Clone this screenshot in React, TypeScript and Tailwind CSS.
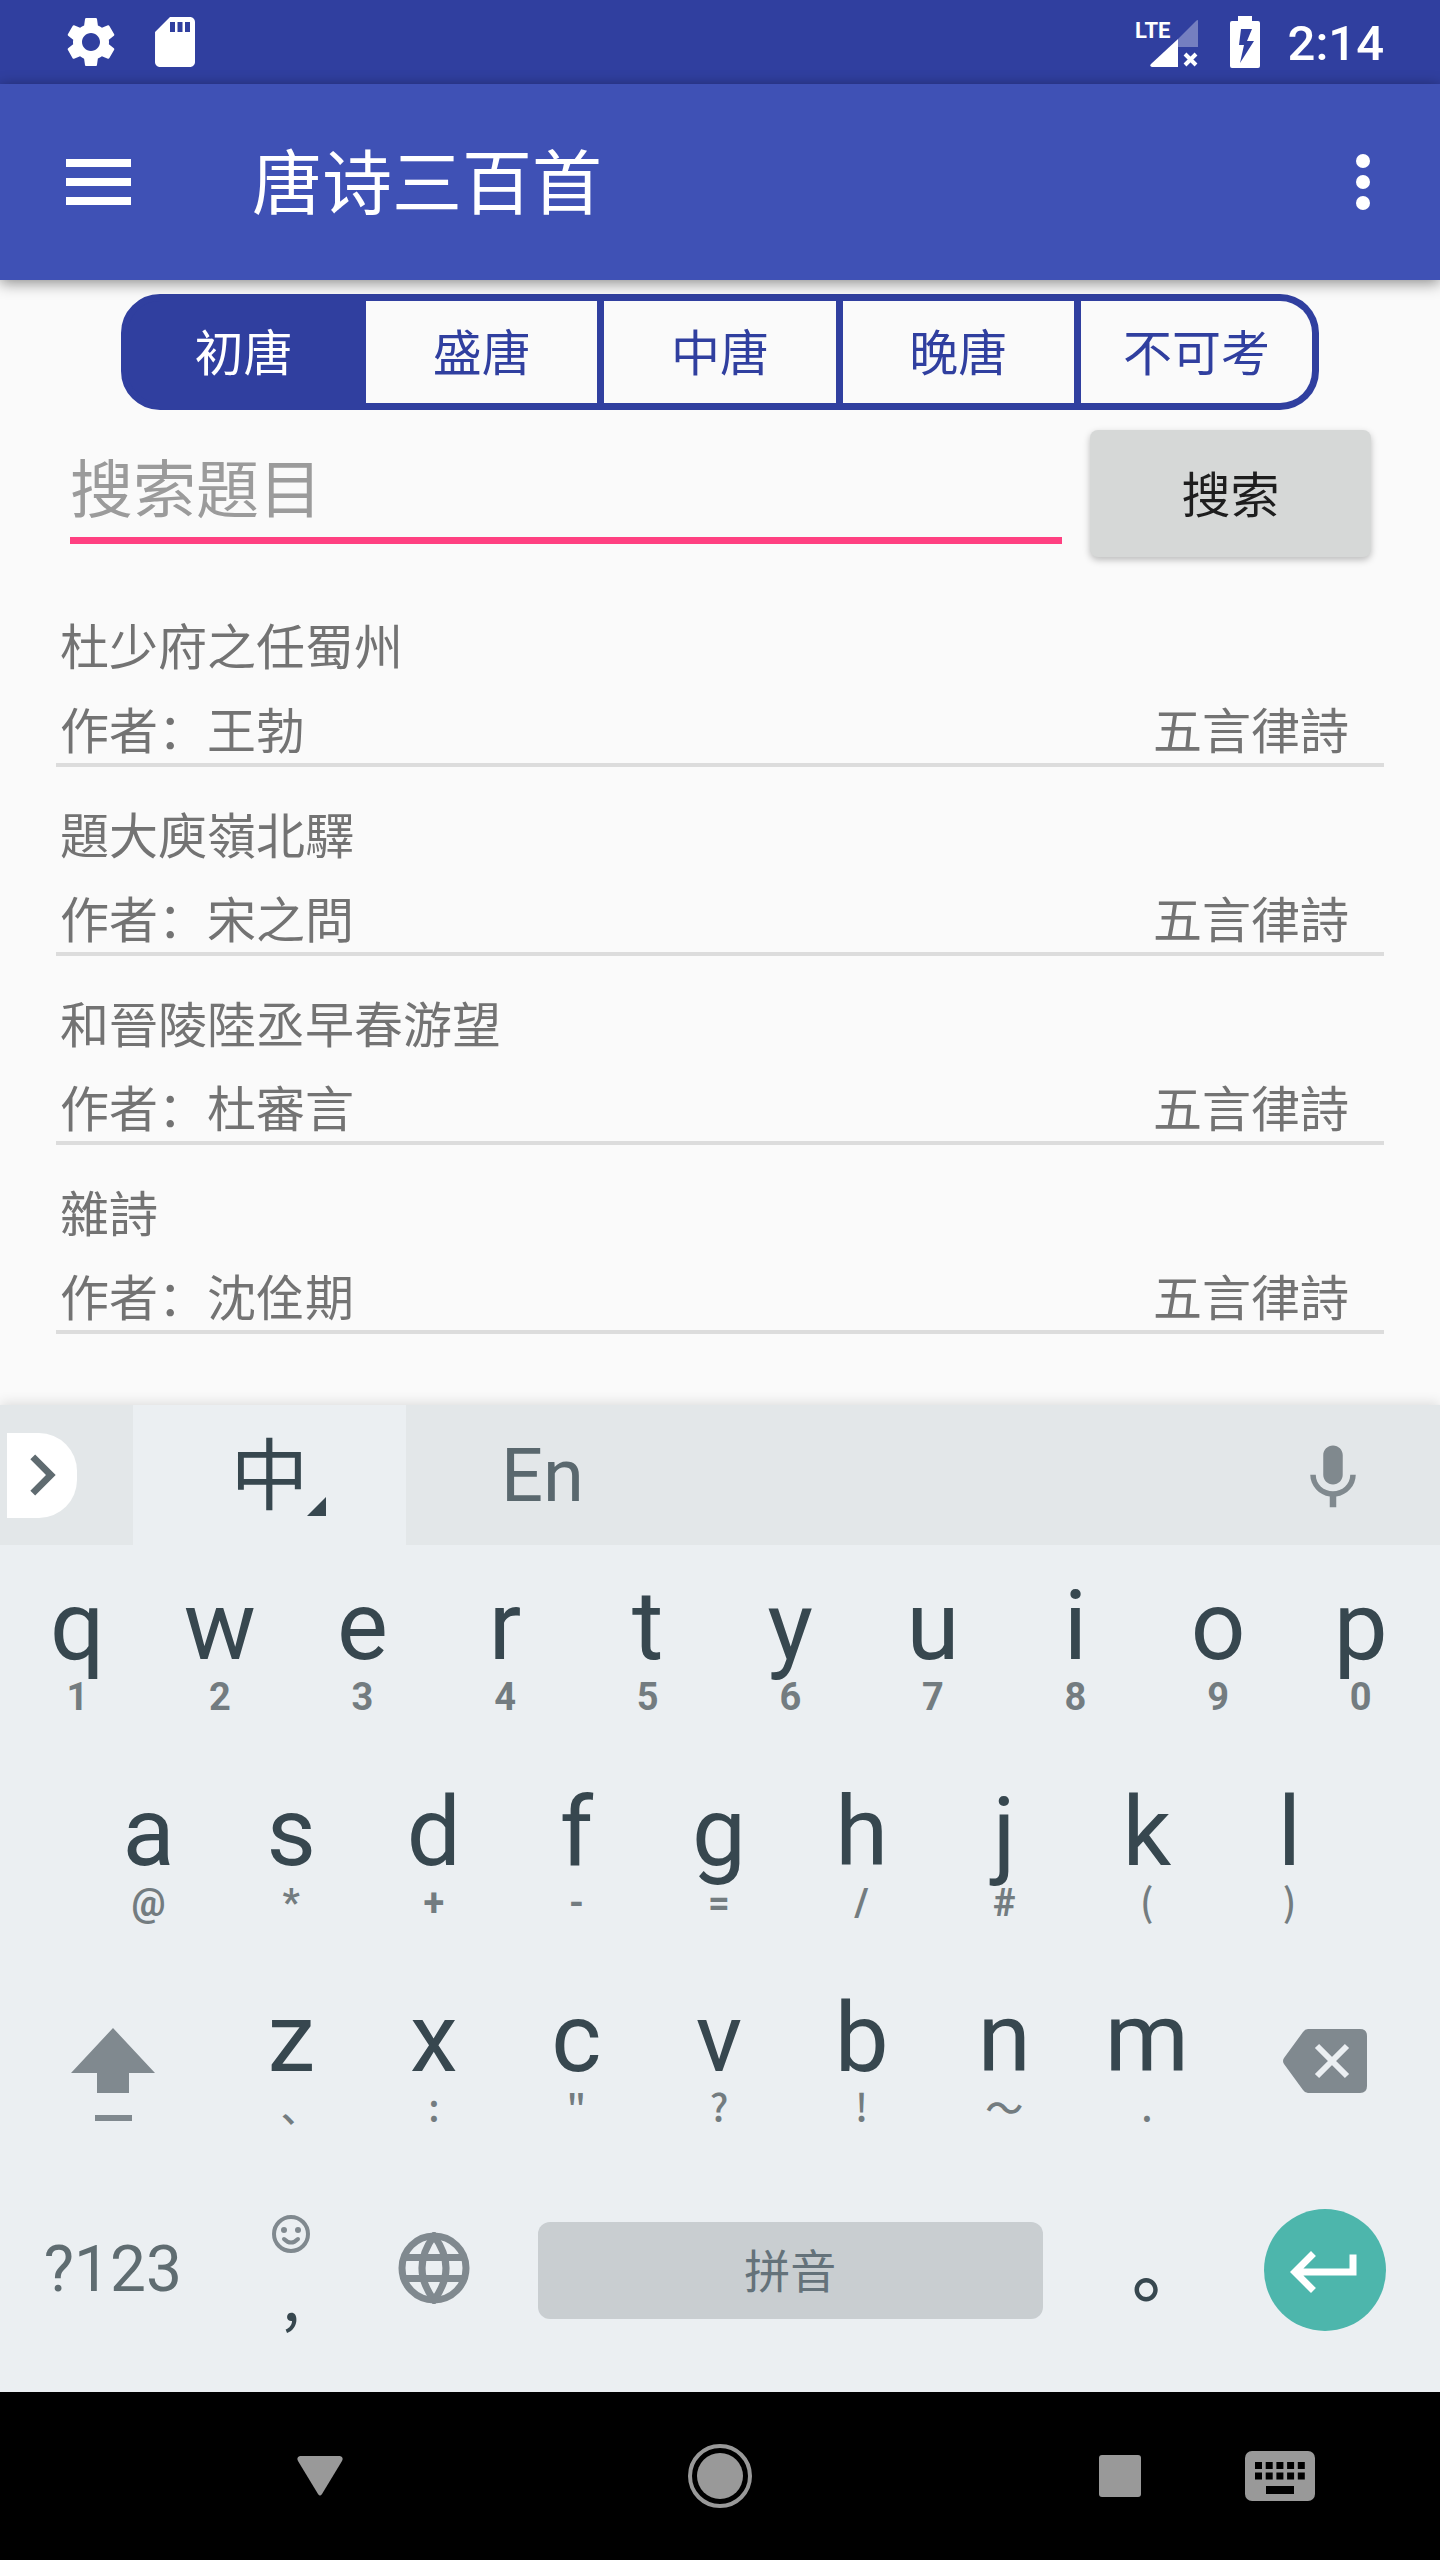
import { ReactNode, useState } from "react"
import {
    MdChevronRight,
    MdKeyboardReturn,
    MdMic,
    MdSdCard,
    MdSettings,
} from "react-icons/md"

type Poem = { title: string; author: string; form: string }
type KeyDef = { letter: string; hint: string; cjk?: boolean }

const PERIODS = ["初唐", "盛唐", "中唐", "晚唐", "不可考"]

const POEMS: Poem[] = [
    { title: "杜少府之任蜀州", author: "王勃", form: "五言律詩" },
    { title: "題大庾嶺北驛", author: "宋之問", form: "五言律詩" },
    { title: "和晉陵陸丞早春游望", author: "杜審言", form: "五言律詩" },
    { title: "雜詩", author: "沈佺期", form: "五言律詩" },
]

const ROW_1: KeyDef[] = [
    { letter: "q", hint: "1" },
    { letter: "w", hint: "2" },
    { letter: "e", hint: "3" },
    { letter: "r", hint: "4" },
    { letter: "t", hint: "5" },
    { letter: "y", hint: "6" },
    { letter: "u", hint: "7" },
    { letter: "i", hint: "8" },
    { letter: "o", hint: "9" },
    { letter: "p", hint: "0" },
]

const ROW_2: KeyDef[] = [
    { letter: "a", hint: "@" },
    { letter: "s", hint: "*" },
    { letter: "d", hint: "+" },
    { letter: "f", hint: "-" },
    { letter: "g", hint: "=" },
    { letter: "h", hint: "/" },
    { letter: "j", hint: "#" },
    { letter: "k", hint: "(", cjk: true },
    { letter: "l", hint: ")", cjk: true },
]

const ROW_3: KeyDef[] = [
    { letter: "z", hint: "､", cjk: true },
    { letter: "x", hint: ":", cjk: true },
    { letter: "c", hint: '"', cjk: true },
    { letter: "v", hint: "?", cjk: true },
    { letter: "b", hint: "!", cjk: true },
    { letter: "n", hint: "～", cjk: true },
    { letter: "m", hint: ".", cjk: true },
]

function StatusBar() {
    return (
        <div className="flex h-[84px] items-center justify-between bg-[#303f9f] pr-[56px] pl-[61px] text-white">
            <div className="flex items-center gap-6">
                <MdSettings className="size-[60px]" />
                <MdSdCard className="size-[60px]" />
            </div>
            <div className="flex items-center">
                <svg viewBox="0 0 66 50" className="h-[50px] w-[66px]">
                    <text
                        x="3"
                        y="21"
                        fill="#fff"
                        fontSize="22"
                        fontWeight="700"
                        fontFamily="Roboto, sans-serif"
                    >
                        LTE
                    </text>
                    <path d="M46 22 64 4q2-2 2 0v26H46z" fill="#757fc0" />
                    <path d="M46 22v28H20q-3-1-1-3z" fill="#fff" />
                    <path
                        d="m53 37 11 11m0-11L53 48"
                        stroke="#fff"
                        strokeWidth="4"
                    />
                </svg>
                <svg
                    viewBox="0 0 30 52"
                    className="ml-8 h-[52px] w-[30px]"
                    fillRule="evenodd"
                >
                    <path
                        d="M8 0h14v5h6q2 0 2 2v43q0 2-2 2H2q-2 0-2-2V7q0-2 2-2h6zM11 13 9 29h5l-4 18 14-22h-7l5-12z"
                        fill="#fff"
                    />
                </svg>
                <span className="ml-7 pt-1 text-[49px] leading-[60px] font-medium">
                    2:14
                </span>
            </div>
        </div>
    )
}

function AppBar() {
    return (
        <header className="relative z-10 flex h-[196px] items-center bg-[#3f51b5] pr-[70px] pl-[66px] text-white shadow-[0_3px_14px_rgba(0,0,0,0.45)]">
            <button aria-label="菜单">
                <svg
                    viewBox="0 0 65 46"
                    className="h-[46px] w-[65px]"
                    fill="currentColor"
                >
                    <path d="M0 0h65v8H0zM0 19h65v8H0zM0 38h65v8H0z" />
                </svg>
            </button>
            <h1 className="ml-[121px] flex-1 pt-1.5 text-[70px] leading-[84px]">
                唐诗三百首
            </h1>
            <button aria-label="更多选项">
                <svg
                    viewBox="0 0 14 56"
                    className="h-[56px] w-[14px]"
                    fill="currentColor"
                >
                    <circle cx="7" cy="7" r="7" />
                    <circle cx="7" cy="28" r="7" />
                    <circle cx="7" cy="49" r="7" />
                </svg>
            </button>
        </header>
    )
}

function PeriodTabs() {
    const [active, setActive] = useState(0)

    return (
        <div className="mx-[121px] mt-[14px] flex h-[116px] text-[49px]">
            {PERIODS.map((period, i) => (
                <button
                    key={period}
                    onClick={() => setActive(i)}
                    className={`flex-1 border-y-[7px] border-r-[7px] border-[#303f9f] pt-1.5 first:rounded-l-[39px] first:border-l-[7px] last:rounded-r-[39px] ${
                        i === active
                            ? "bg-[#303f9f] text-white"
                            : "text-[#303f9f]"
                    }`}
                >
                    {period}
                </button>
            ))}
        </div>
    )
}

function PoemRow({ poem }: { poem: Poem }) {
    return (
        <li className="flex flex-col gap-6 border-b-4 border-[#dcdcdc] pt-[41px] pr-[35px] pl-1 text-[49px] leading-[60px] text-[#737373]">
            <span>{poem.title}</span>
            <div className="flex justify-between">
                <span>作者：{poem.author}</span>
                <span>{poem.form}</span>
            </div>
        </li>
    )
}

function LetterKey({
    def,
    className = "",
    onPress,
}: {
    def: KeyDef
    className?: string
    onPress: (letter: string) => void
}) {
    return (
        <button
            onClick={() => onPress(def.letter)}
            className={`col-span-2 flex flex-col items-center justify-center ${className}`}
        >
            <span className="text-[96px] leading-[96px] text-[#37474f]">
                {def.letter}
            </span>
            <span
                className={`text-[38px] text-[#737c80] ${
                    def.cjk
                        ? "pb-1.5 font-['Noto_Sans_CJK_SC',sans-serif] leading-[40px] font-medium"
                        : "leading-[46px] font-bold"
                }`}
            >
                {def.hint}
            </span>
        </button>
    )
}

function KeyRow({ children }: { children: ReactNode }) {
    return <div className="grid h-[206px] grid-cols-20">{children}</div>
}

function SmileyIcon() {
    return (
        <svg
            viewBox="0 0 38 38"
            className="size-[38px]"
            fill="none"
            stroke="#80898f"
            strokeWidth="4"
        >
            <circle cx="19" cy="19" r="17" />
            <path d="M12 24q7 7 14 0" strokeLinecap="round" />
            <circle cx="12" cy="15" r="3" fill="#80898f" stroke="none" />
            <circle cx="26" cy="15" r="3" fill="#80898f" stroke="none" />
        </svg>
    )
}

function GlobeIcon() {
    return (
        <svg
            viewBox="0 0 72 72"
            className="size-[72px]"
            fill="none"
            stroke="currentColor"
            strokeWidth="7"
        >
            <circle cx="36" cy="36" r="32" />
            <path d="M36 4Q12 36 36 68Q60 36 36 4zM8 25.5h56M8 46.5h56" />
        </svg>
    )
}

function ImeToolbar() {
    return (
        <div className="flex h-[140px] items-center bg-[#e3e7e9]">
            <div className="w-[133px] pl-[7px]">
                <button
                    aria-label="展开"
                    className="flex h-[85px] w-[70px] items-center justify-center rounded-r-[38px] bg-white text-[#5f6b70]"
                >
                    <MdChevronRight className="size-[82px] shrink-0" />
                </button>
            </div>
            <button className="relative h-full w-[273px] bg-[#ebeff2] pt-1.5 text-[78px] leading-[84px] text-[#37474f]">
                中
                <svg
                    viewBox="0 0 19 19"
                    className="absolute right-[80px] bottom-[29px] size-[19px]"
                    fill="currentColor"
                >
                    <path d="M19 0v19H0z" />
                </svg>
            </button>
            <button className="h-full w-[273px] text-[74px] text-[#5a686e]">
                En
            </button>
            <button
                aria-label="语音输入"
                className="mr-[68px] ml-auto pt-1.5 text-[#80898e]"
            >
                <MdMic className="size-[78px]" />
            </button>
        </div>
    )
}

function Keyboard({
    onPress,
    onDelete,
}: {
    onPress: (letter: string) => void
    onDelete: () => void
}) {
    return (
        <section className="relative bg-[#ebeff2] shadow-[0_-2px_12px_rgba(0,0,0,0.12)]">
            <ImeToolbar />
            <div className="pt-px pr-2 pb-[19px] pl-1.5">
                <KeyRow>
                    {ROW_1.map((k) => (
                        <LetterKey key={k.letter} def={k} onPress={onPress} />
                    ))}
                </KeyRow>
                <KeyRow>
                    {ROW_2.map((k, i) => (
                        <LetterKey
                            key={k.letter}
                            def={k}
                            onPress={onPress}
                            className={i === 0 ? "col-start-2" : ""}
                        />
                    ))}
                </KeyRow>
                <KeyRow>
                    <button
                        aria-label="Shift"
                        className="col-span-3 flex items-center justify-center pt-7 text-[#80898f]"
                    >
                        <svg
                            viewBox="0 0 84 94"
                            className="h-[94px] w-[84px]"
                            fill="currentColor"
                        >
                            <path d="M42 0 84 45H58v20H26V45H0zM24 87h37v6H24z" />
                        </svg>
                    </button>
                    {ROW_3.map((k) => (
                        <LetterKey key={k.letter} def={k} onPress={onPress} />
                    ))}
                    <button
                        aria-label="删除"
                        onClick={onDelete}
                        className="col-span-3 flex items-center justify-center"
                    >
                        <svg viewBox="0 0 84 64" className="h-[64px] w-[84px]">
                            <path
                                d="M20 3q2-3 5-3h52q7 0 7 7v50q0 7-7 7H25q-3 0-5-3L1 35q-2-3 0-6z"
                                fill="#80898f"
                            />
                            <path
                                d="m34 17 30 30m0-30L34 47"
                                stroke="#ebeff2"
                                strokeWidth="6"
                            />
                        </svg>
                    </button>
                </KeyRow>
                <div className="pt-[3px]">
                    <KeyRow>
                        <button className="col-span-3 text-[64px] text-[#5f6c71]">
                            ?123
                        </button>
                        <button
                            onClick={() => onPress("，")}
                            className="col-span-2 flex flex-col items-center justify-center gap-2 text-[#37474f]"
                        >
                            <SmileyIcon />
                            <span className="font-['Noto_Sans_CJK_SC',sans-serif] text-[64px] leading-[64px]">
                                ,
                            </span>
                        </button>
                        <button
                            aria-label="切换语言"
                            className="col-span-2 flex items-center justify-center pb-1 text-[#80898f]"
                        >
                            <GlobeIcon />
                        </button>
                        <button
                            onClick={() => onPress(" ")}
                            className="col-span-8 mx-[33px] h-[97px] self-center rounded-xl bg-[#c9ced1] pt-1 text-[46px] text-[#64727a]"
                        >
                            拼音
                        </button>
                        <button
                            onClick={() => onPress("。")}
                            className="col-span-2 pb-3 pl-2 font-['Noto_Sans_CJK_SC',sans-serif] text-[74px] leading-[84px] font-medium text-[#37474f]"
                        >
                            ｡
                        </button>
                        <button
                            aria-label="回车"
                            className="col-span-3 flex size-[122px] items-center justify-center place-self-center rounded-full bg-[#4db6ac] pt-1 text-white"
                        >
                            <MdKeyboardReturn className="size-[84px]" />
                        </button>
                    </KeyRow>
                </div>
            </div>
        </section>
    )
}

function NavBar() {
    return (
        <nav className="grid h-[168px] grid-cols-18 items-center bg-black text-[#999]">
            <button
                aria-label="返回"
                className="col-span-2 col-start-4 flex justify-center"
            >
                <svg
                    viewBox="0 0 46 40"
                    className="h-[40px] w-[46px]"
                    fill="currentColor"
                >
                    <path d="M3 0h40q4 1 2 5L25 38q-2 3-4 0L1 5Q-1 1 3 0z" />
                </svg>
            </button>
            <button
                aria-label="主屏幕"
                className="col-span-2 col-start-9 flex justify-center"
            >
                <svg viewBox="0 0 64 64" className="size-[64px]">
                    <circle
                        cx="32"
                        cy="32"
                        r="30"
                        fill="none"
                        stroke="currentColor"
                        strokeWidth="4"
                    />
                    <circle cx="32" cy="32" r="23" fill="currentColor" />
                </svg>
            </button>
            <button
                aria-label="最近任务"
                className="col-span-2 col-start-14 flex justify-center"
            >
                <span className="size-[42px] rounded-[3px] bg-[#999]" />
            </button>
            <button
                aria-label="切换键盘"
                className="col-span-2 flex justify-center"
            >
                <svg viewBox="0 0 70 50" className="h-[50px] w-[70px]">
                    <rect width="70" height="50" rx="7" fill="currentColor" />
                    <path
                        d="M10 14.5h50M10 25h50"
                        stroke="#000"
                        strokeWidth="7"
                        strokeDasharray="7 3.7"
                    />
                    <path d="M21 35h28v8H21z" />
                </svg>
            </button>
        </nav>
    )
}

function App() {
    const [query, setQuery] = useState("")

    return (
        <div className="flex min-h-screen flex-col bg-[#fafafa] font-['Roboto','Noto_Sans_CJK_SC',sans-serif]">
            <StatusBar />
            <AppBar />
            <main className="flex-1">
                <PeriodTabs />
                <form
                    className="mt-5 flex gap-7 pr-[69px] pl-[70px]"
                    onSubmit={(e) => e.preventDefault()}
                >
                    <input
                        type="text"
                        aria-label="搜索題目"
                        placeholder="搜索題目"
                        value={query}
                        onChange={(e) => setQuery(e.target.value)}
                        className="h-[114px] min-w-0 flex-1 border-b-[7px] border-[#ff4081] pt-3.5 text-[63px] text-[#212121] outline-none placeholder:text-[#9b9b9b]"
                    />
                    <button className="h-[127px] w-[281px] rounded-lg bg-[#d6d8d7] pt-1.5 text-[49px] text-[#1e1e1e] shadow-[0_3px_7px_rgba(0,0,0,0.25)]">
                        搜索
                    </button>
                </form>
                <ul className="mt-[21px] px-14">
                    {POEMS.map((poem) => (
                        <PoemRow key={poem.title} poem={poem} />
                    ))}
                </ul>
            </main>
            <Keyboard
                onPress={(letter) => setQuery(query + letter)}
                onDelete={() => setQuery(query.slice(0, -1))}
            />
            <NavBar />
        </div>
    )
}

export default App
